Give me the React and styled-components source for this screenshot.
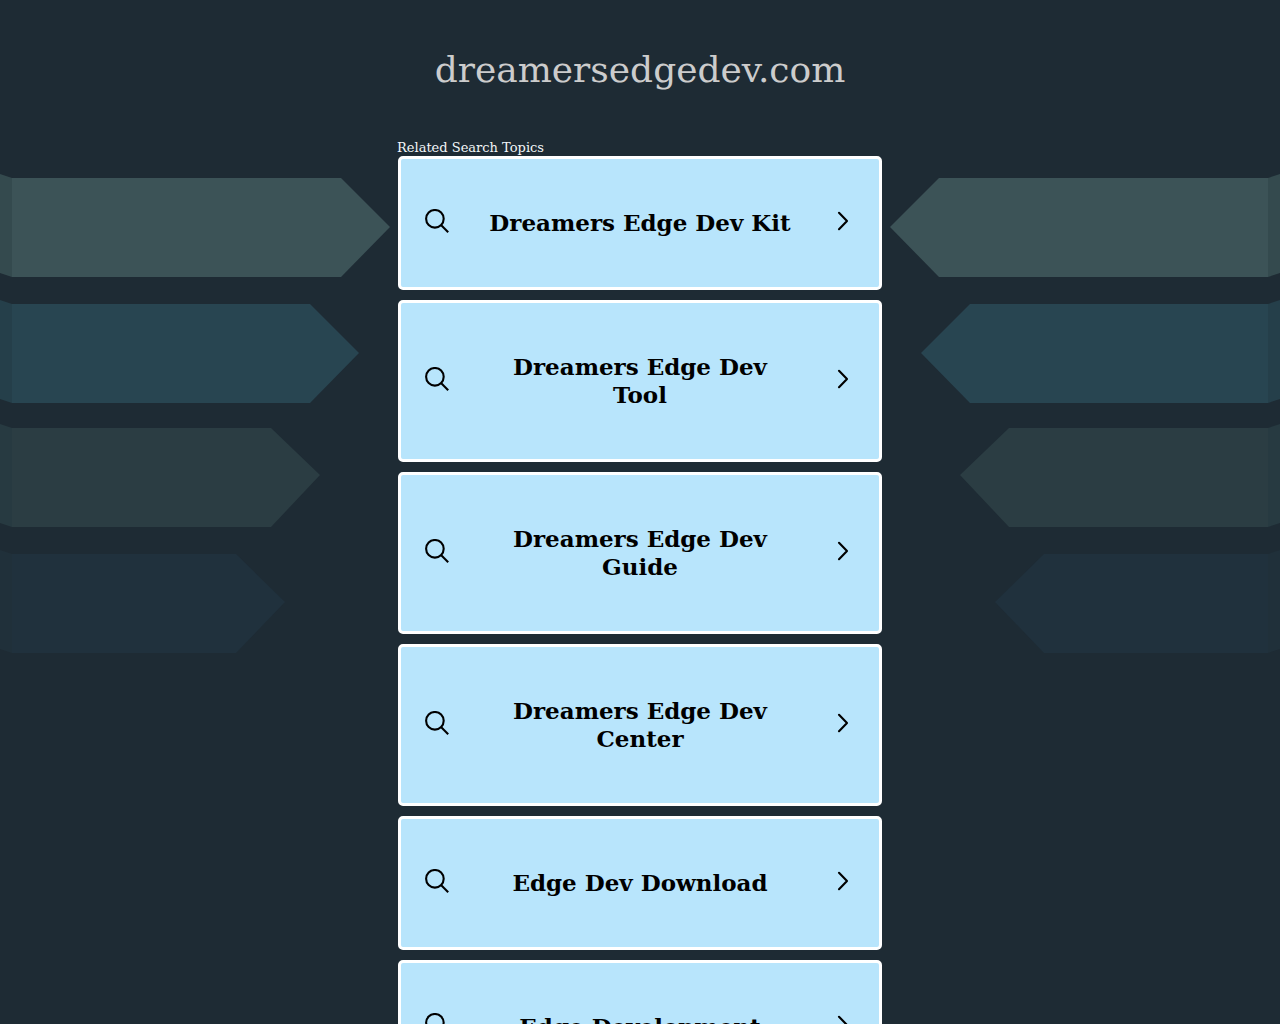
import React from "react";
import styled, { createGlobalStyle } from "styled-components";

const GlobalStyle = createGlobalStyle`
  body {
    margin: 0;
    background: #1e2b34;
    font-family: "DejaVu Serif", serif;
    scrollbar-width: none;
  }
`;

const Page = styled.div`
  position: relative;
  display: flex;
  flex-direction: column;
  align-items: center;
  padding: 48px 16px 10px;
  overflow: hidden;
`;

const Ribbons = styled.svg`
  position: absolute;
  top: 170px;
  left: ${(props) => (props.$mirrored ? "auto" : 0)};
  right: ${(props) => (props.$mirrored ? 0 : "auto")};
  transform: ${(props) => (props.$mirrored ? "scaleX(-1)" : "none")};
`;

const Title = styled.h1`
  margin: 0;
  color: #cccccc;
  font-size: 36px;
  font-weight: 400;
  line-height: 44px;
`;

const Topics = styled.main`
  position: relative;
  box-sizing: border-box;
  width: 100%;
  max-width: 486px;
  margin-top: 47px;
`;

const TopicsLabel = styled.h2`
  margin: 0;
  color: #f2f6f8;
  font-size: 13px;
  font-weight: 400;
  line-height: 17px;
`;

const TopicList = styled.ul`
  display: flex;
  flex-direction: column;
  gap: 10px;
  margin: 0;
  padding: 0 1px;
  list-style: none;
`;

const TopicLink = styled.a`
  display: flex;
  align-items: center;
  justify-content: space-between;
  padding: 50px 24px;
  border: 3px solid #ffffff;
  border-radius: 5px;
  background: #b8e5fc;
  color: #000000;
  text-decoration: none;
`;

const TopicText = styled.span`
  flex: 0 1 304px;
  font-size: 23px;
  font-weight: 700;
  line-height: 28px;
  text-align: center;
`;

const Icon = styled.svg`
  flex: none;
  width: 24px;
  height: 28px;
  fill: none;
  stroke: currentColor;
  stroke-width: 2.1;
`;

const topics = [
  "Dreamers Edge Dev Kit",
  "Dreamers Edge Dev Tool",
  "Dreamers Edge Dev Guide",
  "Dreamers Edge Dev Center",
  "Edge Dev Download",
  "Edge Development",
];

const ribbons = [
  { y: 8, tip: 390, tipY: 57, color: "#3c5357", fold: "#344a4e" },
  { y: 134, tip: 359, tipY: 183, color: "#284551", fold: "#253f4a" },
  { y: 258, tip: 320, tipY: 305, color: "#2b3d43", fold: "#273a41" },
  { y: 384, tip: 285, tipY: 432, color: "#20313d", fold: "#20303a" },
];

const SideRibbons = ({ mirrored }) => (
  <Ribbons $mirrored={mirrored} width="392" height="490" aria-hidden="true">
    {ribbons.map(({ y, tip, tipY, color, fold }) => (
      <g key={y}>
        <path d={`M0 ${y - 4}L12 ${y}V${y + 99}L0 ${y + 95}Z`} fill={fold} />
        <path
          d={`M12 ${y}H${tip - 49}L${tip} ${tipY}L${tip - 49} ${y + 99}H12Z`}
          fill={color}
        />
      </g>
    ))}
  </Ribbons>
);

const Topic = ({ children }) => (
  <TopicLink href="#">
    <Icon viewBox="0 0 24 28" aria-hidden="true">
      <circle cx="9.9" cy="9.8" r="8.8" />
      <path d="M16 16L23.2 23.2" />
    </Icon>
    <TopicText>{children}</TopicText>
    <Icon viewBox="0 0 24 28" aria-hidden="true">
      <path d="M8 3.8L16 12L8 20.2" strokeLinecap="round" strokeLinejoin="round" />
    </Icon>
  </TopicLink>
);

const App = () => {
  return (
    <Page>
      <GlobalStyle />
      <SideRibbons />
      <SideRibbons mirrored />
      <Title>dreamersedgedev.com</Title>
      <Topics>
        <TopicsLabel>Related Search Topics</TopicsLabel>
        <TopicList>
          {topics.map((topic) => (
            <li key={topic}>
              <Topic>{topic}</Topic>
            </li>
          ))}
        </TopicList>
      </Topics>
    </Page>
  );
};

export default App;
